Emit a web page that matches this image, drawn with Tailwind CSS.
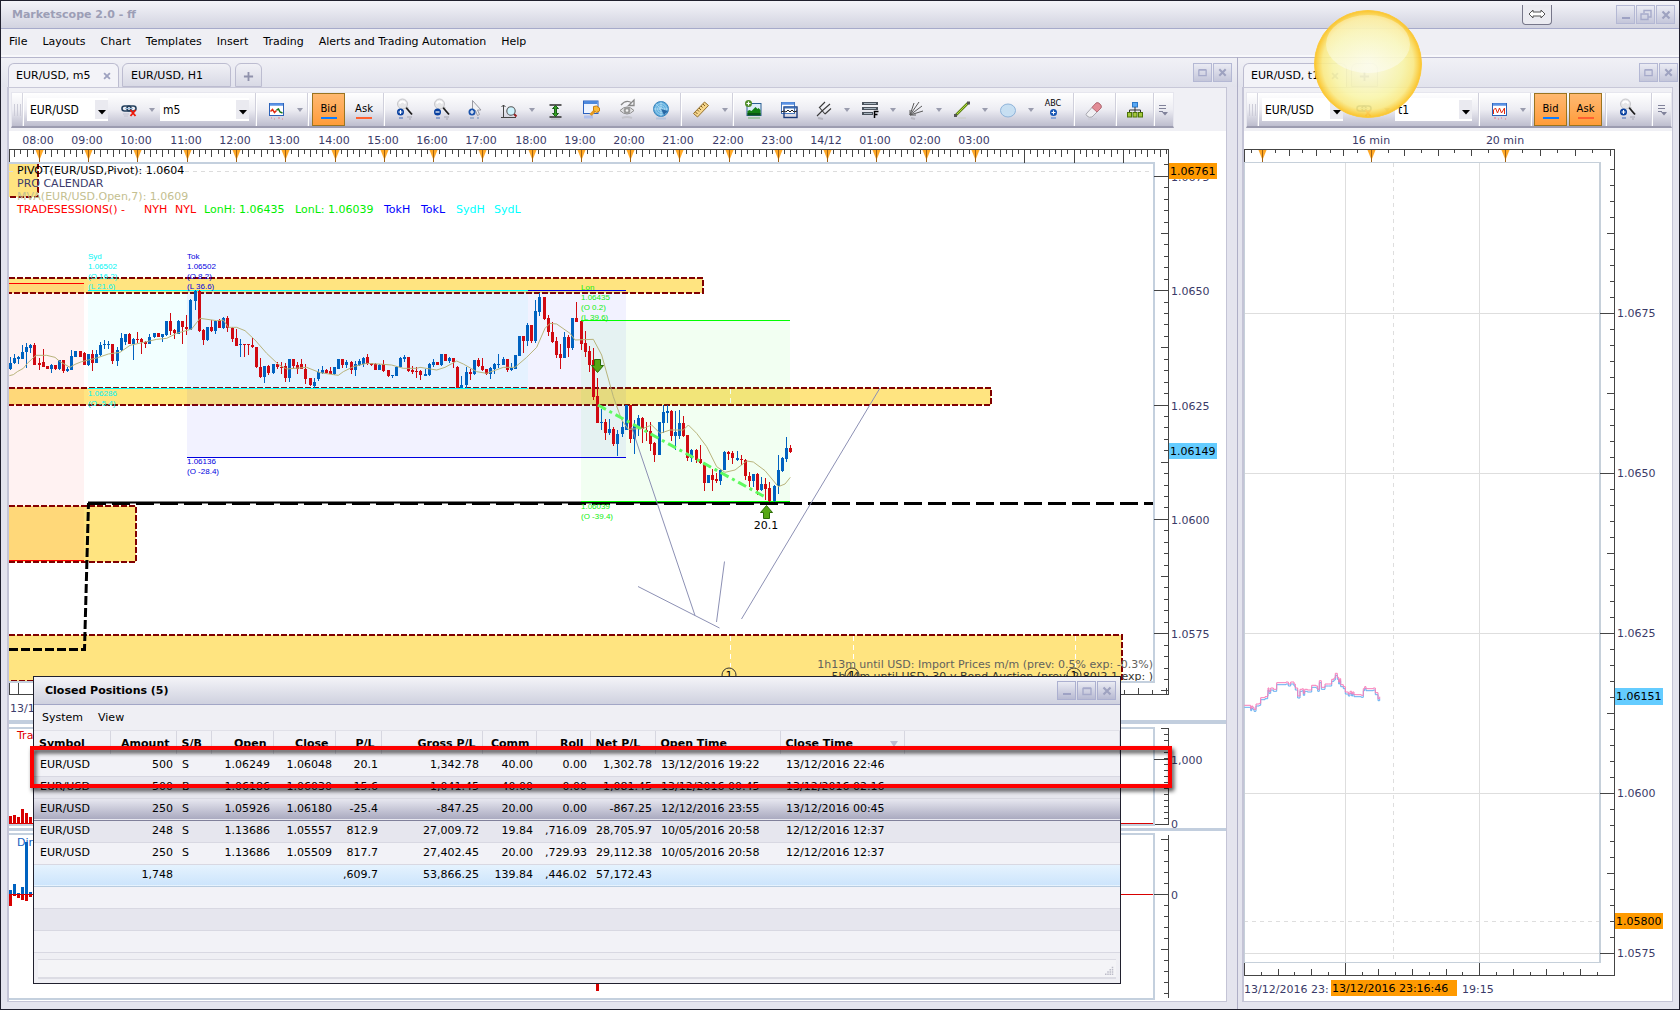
<!DOCTYPE html>
<html lang="en">
<head>
  <meta charset="UTF-8" />
  <meta name="viewport" content="width=device-width, initial-scale=1.0">
  <title>Marketscope 2.0 - ff</title>
  <script src="https://cdn.jsdelivr.net/npm/@tailwindcss/browser@4"></script>
</head>
<body class="font-['DejaVu_Sans',Verdana,sans-serif] text-[11px] leading-4 text-black">

  <!-- Icon sprite -->
  <svg class="hidden">
    <symbol id="i-link" viewBox="0 0 24 24">
      <g fill="none" stroke="#24405e" stroke-width="1.600"><rect x="5" y="8" width="9" height="5" rx="2.500"/><rect x="10" y="8" width="9" height="5" rx="2.500"/></g>
      <path d="M8 10.500h8" stroke="#9cc0e0" stroke-width="1"/>
      <path d="M13.500 12l5 6M18.500 12l-5 6" stroke="#f01808" stroke-width="1.800"/>
      <path d="M6 16h6M7 18h4" stroke="#c4c4d2"/>
    </symbol>
    <symbol id="i-chart" viewBox="0 0 24 24">
      <rect x="5.500" y="5.500" width="14" height="12" fill="#fff" stroke="#2c62b8"/><path d="M6 6.500h13" stroke="#5b92e4" stroke-width="2.500"/>
      <path d="M6.500 13.500l2-2 2 3 2-2" fill="none" stroke="#e22a10" stroke-width="1.500"/><path d="M12.500 12l2-1 1.500 3 2.500 1" fill="none" stroke="#187818" stroke-width="1.500"/>
      <path d="M7 20h1M10 21h1M14 20h2M18 21h1" stroke="#d8a8b4" stroke-width="2"/>
    </symbol>
    <symbol id="i-ticks" viewBox="0 0 24 24">
      <rect x="5.500" y="5.500" width="14" height="12" fill="#fff" stroke="#2c62b8"/><path d="M6 6.500h13" stroke="#5b92e4" stroke-width="2.500"/>
      <path d="M6.500 16v-4l2-2 2 5 2-5 2 5 3-5v6" fill="none" stroke="#e22a10"/>
      <path d="M7 20h2M11 21h1M14 20h1M18 21h1" stroke="#e0a0b0" stroke-width="2"/>
    </symbol>
    <symbol id="i-zoomin" viewBox="0 0 24 24">
      <path d="M13.500 9l6.500 7.500" stroke="#1c1c1c" stroke-width="1.800"/><path d="M13.500 8l3 2" stroke="#aaa"/><circle cx="10.500" cy="6" r="5" fill="#e6e6e8" stroke="#c6c6ca"/><path d="M7.500 5.500q3-4 6 0" stroke="#fff" stroke-width="2" fill="none"/>
      <circle cx="8.500" cy="14" r="3.500" fill="#0840a0"/><path d="M8.500 12v4M6.500 14h4" stroke="#fff" stroke-width="1.200"/>
      <path d="M7 20h4" stroke="#8ca0cc" stroke-width="2"/><path d="M15 19h5M17 21h2" stroke="#a8a8b4"/>
    </symbol>
    <symbol id="i-zoomout" viewBox="0 0 24 24">
      <path d="M13.500 9l6.500 7.500" stroke="#1c1c1c" stroke-width="1.800"/><path d="M13.500 8l3 2" stroke="#aaa"/><circle cx="10.500" cy="6" r="5" fill="#e6e6e8" stroke="#c6c6ca"/><path d="M7.500 5.500q3-4 6 0" stroke="#fff" stroke-width="2" fill="none"/>
      <circle cx="8.500" cy="14" r="3.500" fill="#0840a0"/><path d="M6.500 14h4" stroke="#fff" stroke-width="1.200"/>
      <path d="M7 20h4" stroke="#8ca0cc" stroke-width="2"/><path d="M15 19h5M17 21h2" stroke="#a8a8b4"/>
    </symbol>
    <symbol id="i-cursor" viewBox="0 0 24 24">
      <path d="M9.500 2.500v13l3-3 2 5 2-1-2-4.500h3.500z" fill="#f2f2f4" stroke="#9a9aa2"/>
      <circle cx="9" cy="14" r="3.500" fill="#1c54ac"/><path d="M9 12v4M7 14h4" stroke="#fff" stroke-width="1.200"/><path d="M7 20h4M14 20h2" stroke="#a0b0cc" stroke-width="2"/>
    </symbol>
    <symbol id="i-range" viewBox="0 0 24 24">
      <path d="M6.500 7v12.500M4.500 9l2-2 2 2M4 19.500h15" fill="none" stroke="#444"/><path d="M17 16l2.500 2.500" stroke="#962020" stroke-width="2"/><circle cx="14" cy="13" r="4.200" fill="#cdf2fc" stroke="#555" stroke-width="1.100"/>
    </symbol>
    <symbol id="i-fit" viewBox="0 0 24 24">
      <path d="M6.500 7h12M6.500 19h12" stroke="#2c2c2c" stroke-width="1.500"/><path d="M12.500 7.500l3 3h-2v5h2l-3 3-3-3h2v-5h-2z" fill="#34a020" stroke="#0c540c" stroke-width=".9"/><path d="M8 21h9" stroke="#b0b4bc"/>
    </symbol>
    <symbol id="i-key" viewBox="0 0 24 24">
      <rect x="4.500" y="3" width="14.500" height="12.500" fill="#eef4ff" stroke="#2c62c0"/><path d="M5 4.500h13.500" stroke="#4d88dc" stroke-width="3"/><path d="M11.500 17l5-5" stroke="#e49a20" stroke-width="3"/><path d="M12 17.500l1.500 1" stroke="#c87e10" stroke-width="1.500"/><path d="M14.500 8.500l3-.500 3 2v3l-3 1.500-3-2z" fill="#fcba38" stroke="#c87e10"/><path d="M5 19h9" stroke="#b0c0ec" stroke-width="3"/>
    </symbol>
    <symbol id="i-eye" viewBox="0 0 24 24">
      <path d="M6 7q5-6 11-2M19 2v5.500h-5.500z" fill="none" stroke="#888" stroke-width="1.300"/><path d="M5 12.500q7-7 14 0q-7 7-14 0z" fill="#e4e4e6" stroke="#8c8c8c"/><circle cx="12" cy="12.500" r="3.300" fill="#9a9a9a"/><circle cx="12" cy="12.500" r="1.300" fill="#f4f4f4"/><path d="M7 20q5-2 10 0" fill="none" stroke="#c4c4cc" stroke-width="2"/>
    </symbol>
    <symbol id="i-globe" viewBox="0 0 24 24">
      <circle cx="12" cy="11" r="7.500" fill="#5cabdc" stroke="#3a84bc"/><g fill="none" stroke="#b0dcf4" stroke-width=".8"><circle cx="12" cy="11" r="5.500"/><circle cx="12" cy="11" r="3.500"/><circle cx="12" cy="11" r="1.500"/><path d="M12 3.500v15M4.500 11h15M7 6l10 10"/></g><path d="M12 11l7 2-4 4z" fill="#2868a4"/><path d="M7 20.500h10" stroke="#b4c4dc" stroke-width="2"/>
    </symbol>
    <symbol id="i-ruler" viewBox="0 0 24 24">
      <path d="M4.500 15.500L15.500 4l4 3.500L8.500 19z" fill="#f6d68c" stroke="#94702c"/><path d="M14 6l2 2M12 8l1.500 1.500M10 10l2 2M8.500 12l1.500 1.500M6.500 14l2 2" stroke="#7c5a20"/>
    </symbol>
    <symbol id="i-picture" viewBox="0 0 24 24">
      <rect x="6" y="5.500" width="14" height="12" fill="#dcecf8" stroke="#2c6094"/><path d="M6.500 17v-4l2-1 2 1 4-4 2 2 1-1 2 2v5z" fill="#148014"/><path d="M6.500 15h13v2.500h-13z" fill="#0a5414"/><circle cx="7.500" cy="5.500" r="3.500" fill="#4c8c24"/><path d="M7.500 3.500v4M5.500 5.500h4" stroke="#fff" stroke-width="1.200"/><path d="M7 20h12" stroke="#a4c4a8" stroke-width="2"/>
    </symbol>
    <symbol id="i-windows" viewBox="0 0 24 24">
      <rect x="4.500" y="4.500" width="13" height="11" fill="#fff" stroke="#4678c0"/><path d="M5 5.500h12" stroke="#5b92e4" stroke-width="2.500"/><rect x="7" y="9" width="13" height="10.500" fill="none" stroke="#1c3c7c" stroke-width="1.400"/><path d="M7.500 9.500h12" stroke="#3c6cb4" stroke-width="2"/><path d="M4 14l3-1 2 1 2-2 2 2 2-2 2 2 3-1" fill="none" stroke="#222"/>
    </symbol>
    <symbol id="i-fork" viewBox="0 0 24 24">
      <path d="M5 18l5-5M7 9l6 7M10 13l8-7M7.500 9.500L13 4M13 16l6-5.500" fill="none" stroke="#3a3a3a" stroke-width="1.100"/><path d="M6 20l5 1" stroke="#b4b4be" stroke-width="2"/>
    </symbol>
    <symbol id="i-fib" viewBox="0 0 24 24">
      <path d="M4 5.500h16M4 10.500h16M4 15.500h11" stroke="#4a525c" stroke-width="3"/><path d="M6 5.500h12M6 10.500h12M6 15.500h8" stroke="#a8b4be"/><path d="M16.500 20v-6.500h4M16.500 16.500h3" stroke="#000" stroke-width="1.500" fill="none"/>
    </symbol>
    <symbol id="i-fan" viewBox="0 0 24 24">
      <path d="M6 17L10 5M6 17L15 4M6 17L18 8M6 17L19 13M6 12v5h6" fill="none" stroke="#5a5a5a"/><path d="M7 20l4 1" stroke="#b8b8c2" stroke-width="2"/>
    </symbol>
    <symbol id="i-line" viewBox="0 0 24 24">
      <path d="M6 17L18 5" stroke="#5c8414" stroke-width="2.500"/><path d="M6 17L18 5" stroke="#b2d83a"/><rect x="4" y="16" width="3" height="3" fill="#555"/><rect x="17" y="3.500" width="3" height="3" fill="#555"/><path d="M8 20h8" stroke="#c8ccc4"/>
    </symbol>
    <symbol id="i-ellipse" viewBox="0 0 24 24">
      <ellipse cx="12" cy="12.500" rx="7.500" ry="6.500" fill="#c7dff2" stroke="#8fb4da"/>
    </symbol>
    <symbol id="i-eraser" viewBox="0 0 24 24">
      <path d="M5 15L14 5q2-1 4 1t1 4l-9 9q-3 1-5-1t0-3z" fill="#f0f0f3" stroke="#a8a8b0"/><path d="M10 9.500L14 5q2-1 4 1t1 4l-4 4z" fill="#e28c96" stroke="#b86c76"/><path d="M6 21h9" stroke="#c8c8d2"/>
    </symbol>
    <symbol id="i-tree" viewBox="0 0 24 24">
      <rect x="9.500" y="4.500" width="5" height="4.500" fill="#58a8f4" stroke="#2c78c8"/><path d="M12 9v5M6.500 15v-3h11v3" fill="none" stroke="#333"/><g fill="#a4c83c" stroke="#4c7408"><rect x="4.500" y="14.500" width="4" height="4.500"/><rect x="10" y="14.500" width="4" height="4.500"/><rect x="15.500" y="14.500" width="4" height="4.500"/></g>
    </symbol>
    <symbol id="i-caret" viewBox="0 0 8 8"><path d="M1 2h6L4 6z" fill="#9a9cae"/></symbol>
    <symbol id="i-more" viewBox="0 0 10 12"><path d="M1 1.500h7M1 4.500h7M1 7.500h4" stroke="#80829a"/><path d="M4 8h6l-3 3.500z" fill="#80829a"/></symbol>
    <symbol id="i-min" viewBox="0 0 12 12"><path d="M2 9h8" stroke="#9ea2c4" stroke-width="2"/></symbol>
    <symbol id="i-max" viewBox="0 0 12 12"><path d="M2 3.500h8v6H2zM2 3h8" fill="none" stroke="#a6aaca" stroke-width="1.400"/></symbol>
    <symbol id="i-restore" viewBox="0 0 12 12"><path d="M4 4V1.500h7V8H8M1 5h7v5.500H1z" fill="none" stroke="#a6aaca" stroke-width="1.400"/></symbol>
    <symbol id="i-close" viewBox="0 0 12 12"><path d="M2.500 2.500l7 7M9.500 2.500l-7 7" stroke="#9ea2c0" stroke-width="2.200"/></symbol>
    <symbol id="i-plus" viewBox="0 0 12 12"><path d="M6 1v10M1 6h10" stroke="#9092ac" stroke-width="2"/></symbol>
  </svg>

  <div class="relative flex h-screen flex-col overflow-hidden border border-[#20202e] bg-[#e4e4ee]">

    <!-- Title bar -->
    <header class="relative flex h-7 shrink-0 items-center justify-between border-b border-[#a6aaca] bg-linear-to-b from-[#f4f4f9] to-[#d2d3e0] pr-1 pl-[11px]">
      <h1 class="font-bold text-[#9c9eb6]">Marketscope 2.0 - ff</h1>
      <div class="flex items-center">
        <button aria-label="Dock" class="mr-16 flex h-5 w-[30px] items-center justify-center rounded-b border border-t-0 border-[#77778a] bg-[#ebebf1]">
          <svg width="18" height="10" viewBox="0 0 18 10"><path d="M1 5l4-4v2h8V1l4 4-4 4V7H5v2z" fill="#fff" stroke="#555"/></svg>
        </button>
        <div class="flex gap-px">
          <button aria-label="Minimize" class="flex h-[19px] w-[19px] items-center justify-center border border-[#b4b8d4] bg-linear-to-b from-[#eaebf3] to-[#c4c6da]"><svg width="12" height="12"><use href="#i-min"/></svg></button>
          <button aria-label="Restore" class="flex h-[19px] w-[19px] items-center justify-center border border-[#b4b8d4] bg-linear-to-b from-[#eaebf3] to-[#c4c6da]"><svg width="12" height="12"><use href="#i-restore"/></svg></button>
          <button aria-label="Close" class="flex h-[19px] w-[19px] items-center justify-center border border-[#b4b8d4] bg-linear-to-b from-[#eaebf3] to-[#c4c6da]"><svg width="12" height="12"><use href="#i-close"/></svg></button>
        </div>
      </div>
    </header>

    <!-- Menu -->
    <nav class="flex h-7 shrink-0 items-center gap-[15px] border-b-2 border-[#f8f8fb] bg-[#efeff4] pl-2">
      <a href="#">File</a>
      <a href="#">Layouts</a>
      <a href="#">Chart</a>
      <a href="#">Templates</a>
      <a href="#">Insert</a>
      <a href="#">Trading</a>
      <a href="#">Alerts and Trading Automation</a>
      <a href="#">Help</a>
    </nav>

    <main class="flex min-h-0 flex-1">

      <!-- Left pane -->
      <section class="flex min-w-0 flex-1 flex-col">
        <div class="flex h-[30px] shrink-0 items-end border-t border-[#b6b6cc] bg-linear-to-b from-[#f1f1f6] to-[#e2e3ed] pl-[7px] pr-[5px]">
          <div class="flex h-6 w-[111px] items-center justify-between rounded-t-md border border-b-0 border-[#bcbcd0] bg-[#f3f3f8] pt-px pr-[6px] pl-[7px]">
            <span>EUR/USD, m5</span>
            <button aria-label="Close tab"><svg width="10" height="10"><use href="#i-close"/></svg></button>
          </div>
          <div class="ml-[3px] flex h-6 w-[109px] items-center rounded-t-md border border-[#bcbcd0] bg-linear-to-b from-[#f1f1f6] to-[#d8d9e5] pt-0.5 pl-2">EUR/USD, H1</div>
          <button aria-label="New tab" class="ml-1 flex h-6 w-[27px] items-center justify-center rounded-t-md border border-[#bcbcd0] bg-linear-to-b from-[#f1f1f6] to-[#d8d9e5] pt-0.5"><svg width="11" height="11"><use href="#i-plus"/></svg></button>
          <div class="mb-[5px] ml-auto flex gap-px">
            <button aria-label="Maximize chart" class="flex h-[19px] w-[19px] items-center justify-center border border-[#b4b8d4] bg-linear-to-b from-[#eaebf3] to-[#c4c6da]"><svg width="11" height="11"><use href="#i-max"/></svg></button>
            <button aria-label="Close chart" class="flex h-[19px] w-[19px] items-center justify-center border border-[#b4b8d4] bg-linear-to-b from-[#eaebf3] to-[#c4c6da]"><svg width="11" height="11"><use href="#i-close"/></svg></button>
          </div>
        </div>

        <div class="mr-[10px] mb-[7px] ml-[6px] flex min-h-0 flex-1 flex-col border-r border-l-2 border-b border-[#c4c4d6] bg-white">
          <div class="h-11 shrink-0 overflow-hidden border-t border-[#c8c8d8] bg-[#f0f0f5] pt-1 pl-0.5">
            <div class="flex h-9 w-[1163px] items-stretch border border-b-2 border-[#e6e6ee] border-b-[#9c9cb0] bg-linear-to-b from-white via-[#ededf3] to-[#bdbdce]">
              <div class="flex w-[10px] shrink-0 items-center justify-center gap-0.5"><i class="h-3 w-px bg-[#ccccd8]"></i><i class="h-3 w-px bg-[#ccccd8]"></i><i class="h-3 w-px bg-[#ccccd8]"></i></div>
              <i class="w-0.5 shrink-0 border-r border-white bg-[#d6d6e0]"></i>
              <div class="relative ml-[3px] w-[81px] shrink-0 self-center">
                <select aria-label="Symbol" class="block h-[23px] w-full appearance-none bg-white pl-[3px] font-['DejaVu_Sans_Condensed','DejaVu_Sans',sans-serif] text-xs"><option>EUR/USD</option></select>
                <span class="pointer-events-none absolute top-0.5 right-0 bottom-0.5 flex w-[13px] items-end justify-center bg-[#eaeaf0] pb-1"><svg width="8" height="5"><path d="M0 0h8L4 4.500z"/></svg></span>
              </div>
              <button aria-label="Unlink" class="ml-[3px] flex w-9 shrink-0 items-center justify-center"><svg width="24" height="24"><use href="#i-link"/></svg></button>
              <button aria-label="Link options" class="flex w-[9px] shrink-0 items-center justify-center"><svg width="8" height="8"><use href="#i-caret"/></svg></button>
              <div class="relative ml-1 w-[89px] shrink-0 self-center">
                <select aria-label="Period" class="block h-[23px] w-full appearance-none bg-white pl-[3px] font-['DejaVu_Sans_Condensed','DejaVu_Sans',sans-serif] text-xs"><option>m5</option></select>
                <span class="pointer-events-none absolute top-0.5 right-0 bottom-0.5 flex w-[13px] items-end justify-center bg-[#eaeaf0] pb-1"><svg width="8" height="5"><path d="M0 0h8L4 4.500z"/></svg></span>
              </div>
              <i class="ml-1.5 w-0.5 shrink-0 border-r border-white bg-[#d0d0dc]"></i>
              <button aria-label="Chart type" class="flex w-[38px] shrink-0 items-center justify-center"><svg width="24" height="24"><use href="#i-chart"/></svg></button>
              <button aria-label="Chart type options" class="flex w-[9px] shrink-0 items-center justify-center"><svg width="8" height="8"><use href="#i-caret"/></svg></button>
              <i class="ml-[3px] w-0.5 shrink-0 border-r border-white bg-[#d0d0dc]"></i>
              <button class="ml-[3px] flex w-[33px] shrink-0 flex-col items-center border border-[#9a7420] bg-linear-to-b from-[#ffb870] to-[#ff9c38] pt-[7px] text-[10px] leading-4">Bid<i class="h-0.5 w-4 bg-[#0a7cff]"></i></button>
              <button class="flex w-[38px] shrink-0 flex-col items-center border border-transparent pt-[7px] text-[10px] leading-4">Ask<i class="h-0.5 w-4 bg-[#ff6030]"></i></button>
              <i class="w-0.5 shrink-0 border-r border-white bg-[#d0d0dc]"></i>
              <button aria-label="Zoom in" class="flex w-[38px] shrink-0 items-center justify-center"><svg width="24" height="24"><use href="#i-zoomin"/></svg></button>
              <button aria-label="Zoom out" class="flex w-[35px] shrink-0 items-center justify-center"><svg width="24" height="24"><use href="#i-zoomout"/></svg></button>
              <button aria-label="Pointer" class="flex w-[33px] shrink-0 items-center justify-center"><svg width="24" height="24"><use href="#i-cursor"/></svg></button>
              <button aria-label="Zoom range" class="flex w-9 shrink-0 items-center justify-center"><svg width="24" height="24"><use href="#i-range"/></svg></button>
              <button aria-label="Zoom range options" class="flex w-[10px] shrink-0 items-center justify-center"><svg width="8" height="8"><use href="#i-caret"/></svg></button>
              <button aria-label="Fit" class="flex w-9 shrink-0 items-center justify-center"><svg width="24" height="24"><use href="#i-fit"/></svg></button>
              <button aria-label="Properties" class="flex w-9 shrink-0 items-center justify-center"><svg width="24" height="24"><use href="#i-key"/></svg></button>
              <button aria-label="Hide" class="flex w-[35px] shrink-0 items-center justify-center"><svg width="24" height="24"><use href="#i-eye"/></svg></button>
              <button aria-label="Sessions" class="flex w-[33px] shrink-0 items-center justify-center"><svg width="24" height="24"><use href="#i-globe"/></svg></button>
              <i class="ml-[3px] w-0.5 shrink-0 border-r border-white bg-[#d0d0dc]"></i>
              <button aria-label="Ruler" class="flex w-[38px] shrink-0 items-center justify-center"><svg width="24" height="24"><use href="#i-ruler"/></svg></button>
              <button aria-label="Ruler options" class="flex w-[9px] shrink-0 items-center justify-center"><svg width="8" height="8"><use href="#i-caret"/></svg></button>
              <i class="ml-[3px] w-0.5 shrink-0 border-r border-white bg-[#d0d0dc]"></i>
              <button aria-label="Add indicator" class="flex w-[38px] shrink-0 items-center justify-center"><svg width="24" height="24"><use href="#i-picture"/></svg></button>
              <button aria-label="Overlay" class="flex w-[33px] shrink-0 items-center justify-center"><svg width="24" height="24"><use href="#i-windows"/></svg></button>
              <button aria-label="Pitchfork" class="flex w-[38px] shrink-0 items-center justify-center"><svg width="24" height="24"><use href="#i-fork"/></svg></button>
              <button aria-label="Pitchfork options" class="flex w-2 shrink-0 items-center justify-center"><svg width="8" height="8"><use href="#i-caret"/></svg></button>
              <button aria-label="Fibonacci" class="flex w-[38px] shrink-0 items-center justify-center"><svg width="24" height="24"><use href="#i-fib"/></svg></button>
              <button aria-label="Fibonacci options" class="flex w-2 shrink-0 items-center justify-center"><svg width="8" height="8"><use href="#i-caret"/></svg></button>
              <button aria-label="Gann fan" class="flex w-[38px] shrink-0 items-center justify-center"><svg width="24" height="24"><use href="#i-fan"/></svg></button>
              <button aria-label="Gann fan options" class="flex w-2 shrink-0 items-center justify-center"><svg width="8" height="8"><use href="#i-caret"/></svg></button>
              <button aria-label="Line" class="flex w-[38px] shrink-0 items-center justify-center"><svg width="24" height="24"><use href="#i-line"/></svg></button>
              <button aria-label="Line options" class="flex w-2 shrink-0 items-center justify-center"><svg width="8" height="8"><use href="#i-caret"/></svg></button>
              <button aria-label="Ellipse" class="flex w-[38px] shrink-0 items-center justify-center"><svg width="24" height="24"><use href="#i-ellipse"/></svg></button>
              <button aria-label="Ellipse options" class="flex w-2 shrink-0 items-center justify-center"><svg width="8" height="8"><use href="#i-caret"/></svg></button>
              <button class="flex w-9 shrink-0 flex-col items-center justify-center text-[8px] leading-2">ABC<svg width="9" height="12" viewBox="0 0 9 12"><circle cx="4.500" cy="4.500" r="3.500" fill="#1656b4"/><path d="M4.500 2.500v4M2.500 4.500h4" stroke="#fff"/><path d="M2 10h5" stroke="#8ca8d8" stroke-width="2"/></svg></button>
              <i class="ml-0.5 w-0.5 shrink-0 border-r border-white bg-[#d0d0dc]"></i>
              <button aria-label="Eraser" class="flex w-[38px] shrink-0 items-center justify-center"><svg width="24" height="24"><use href="#i-eraser"/></svg></button>
              <i class="ml-0.5 w-0.5 shrink-0 border-r border-white bg-[#d0d0dc]"></i>
              <button aria-label="Object tree" class="flex w-9 shrink-0 items-center justify-center"><svg width="24" height="24"><use href="#i-tree"/></svg></button>
              <i class="w-0.5 shrink-0 border-r border-white bg-[#d0d0dc]"></i>
              <button aria-label="More" class="flex w-4 shrink-0 items-center justify-center"><svg width="10" height="12"><use href="#i-more"/></svg></button>
            </div>
          </div>

          <!-- Main chart -->
          <svg class="min-h-0 w-full flex-1" font-size="11" aria-label="EUR/USD m5 chart">
            <g transform="translate(-9,-131)">
              <g fill="#ffe480">
                <rect x="9" y="163" width="29" height="34"/>
                <rect x="9" y="278" width="694" height="15"/>
                <rect x="9" y="388" width="982" height="17"/>
                <rect x="9" y="506" width="127" height="56"/>
                <rect x="9" y="635" width="1113" height="46"/>
              </g>
              <path d="M9 171.500H1153" stroke="#dcdcdc" stroke-dasharray="4 4"/>
              <g stroke="#fff" stroke-dasharray="5 4"><path d="M730.500 389v16M730.500 636v31M853.500 636v31M1075.500 636v31"/></g>
              <g fill="none" stroke="#800000" stroke-width="2" stroke-dasharray="6 2" shape-rendering="crispEdges">
                <path d="M38 163v34H9M9 278H703v15H9M9 388H991v17H9M9 506H136v56H9M9 635H1122v46H9"/>
              </g>
              <rect x="9" y="283" width="75" height="278" fill="#f00" fill-opacity=".05"/>
              <rect x="88" y="290" width="440" height="98" fill="#0ff" fill-opacity=".05"/>
              <rect x="187" y="290" width="439" height="167" fill="#00f" fill-opacity=".05"/>
              <rect x="581" y="320" width="209" height="181" fill="#0f0" fill-opacity=".05"/>
              <g stroke="#000" stroke-width="3" fill="none">
                <path d="M9 649.500H84.500L88.500 503" stroke-dasharray="9 3"/>
                <path d="M88 502.500H790" stroke-width="2"/>
                <path d="M88 503.500H1153" stroke-dasharray="18 6"/>
              </g>
              <g stroke-width="1" shape-rendering="crispEdges">
                <path d="M9 283.500h75M9 560.500h75" stroke="#f00"/>
                <path d="M528 290.500h98M187 457.500h439" stroke="#0000e0"/>
                <path d="M88 290.500h440M88 388.500h440" stroke="#0ff"/>
                <path d="M581 320.500h209M581 501.500h209" stroke="#0f0"/>
              </g>
              <g id="candles" shape-rendering="crispEdges"></g>
              <path id="mva" fill="none" stroke="#b8b47c"/>
              <path d="M598 405L767 498" stroke="#60fa60" stroke-width="3" stroke-dasharray="9 4 3 4"/>
              <g fill="#56a814" stroke="#2c6c08">
                <path d="M594.500 359.500h6v6h3l-6 7-6-7h3z"/>
                <path d="M763.500 518.500h6v-6h3l-6-7-6 7h3z"/>
              </g>
              <g stroke="#8c90b4" fill="none"><path d="M631.500 427L695 615.500M638 586.500L719.500 628M724.500 561.500L716.500 622M741.500 619L880 388"/></g>
              <text x="766" y="529" text-anchor="middle">20.1</text>

              <g font-family="'Liberation Sans',Arial,sans-serif" font-size="8">
                <g fill="#00f4f4"><text x="88" y="259">Syd</text><text x="88" y="269">1.06502</text><text x="88" y="279">(O 16.2)</text><text x="88" y="289">(L 21.6)</text><text x="88" y="396">1.06286</text><text x="88" y="406">(O -5.4)</text></g>
                <g fill="#0000e0"><text x="187" y="259">Tok</text><text x="187" y="269">1.06502</text><text x="187" y="279">(O 8.2)</text><text x="187" y="289">(L 36.6)</text><text x="187" y="464">1.06136</text><text x="187" y="474">(O -28.4)</text></g>
                <g fill="#10ee10"><text x="581" y="290">Lon</text><text x="581" y="300">1.06435</text><text x="581" y="310">(O 0.2)</text><text x="581" y="320">(L 39.6)</text><text x="581" y="509">1.06039</text><text x="581" y="519">(O -39.4)</text></g>
              </g>

              <text x="17" y="174">PIVOT(EUR/USD,Pivot): 1.0604</text>
              <text x="17" y="187" fill="#3c3c6c">PRO CALENDAR</text>
              <text x="17" y="200" fill="#c4c090">MVA(EUR/USD.Open,7): 1.0609</text>
              <g><text x="17" y="213" fill="#f00">TRADESESSIONS() -</text><text x="144" y="213" fill="#f00">NYH</text><text x="175" y="213" fill="#f00">NYL</text><text x="204" y="213" fill="#0e0">LonH: 1.06435</text><text x="295" y="213" fill="#0e0">LonL: 1.06039</text><text x="384" y="213" fill="#00f">TokH</text><text x="421" y="213" fill="#00f">TokL</text><text x="456" y="213" fill="#0ff">SydH</text><text x="494" y="213" fill="#0ff">SydL</text></g>

              <g fill="none" stroke="#333"><circle cx="729" cy="675" r="7"/><circle cx="852" cy="675" r="7"/><circle cx="1074" cy="675" r="7"/></g>
              <g text-anchor="middle"><text x="729" y="679">1</text><text x="852" y="679">1</text><text x="1074" y="679">1</text></g>
              <text x="1153" y="668" text-anchor="end" fill="#62625c">1h13m until USD: Import Prices m/m (prev: 0.5% exp: -0.3%)</text>
              <text x="1153" y="680" text-anchor="end" fill="#34342c">5h44m until USD: 30-y Bond Auction (prev: 2.80|2.1 exp: )</text>

              <!-- frames -->
              <g fill="none" stroke="#c4d0de" stroke-width="2" shape-rendering="crispEdges"><path d="M9 163H1154V682H9M9 728H1154V825H9M9 834H1154V999H9"/></g>
              <path d="M9 719.500h1217v4H9zM9 828h1217v3H9z" fill="#c2cede" shape-rendering="crispEdges"/>
              <path d="M9 823.500H1153M9 894.500H1153" stroke="#d80000"/>
              <g id="bars" shape-rendering="crispEdges"></g>
              <text x="17" y="739" fill="#e00000">Tra</text>
              <text x="17" y="846" fill="#1860c0">Dir</text>
              <text x="10" y="712" fill="#3c3c6c">13/12</text>
              <g id="axisL" fill="#3a3a68"></g>
              <rect x="1169" y="163" width="48" height="16" fill="#ff9a00"/><text x="1170" y="175">1.06761</text>
              <rect x="1169" y="443" width="48" height="16" fill="#64ccff"/><text x="1170" y="455">1.06149</text>
              <g fill="#3a3a68"><text x="1171" y="764">1,000</text><text x="1171" y="828">0</text><text x="1171" y="899">0</text></g>
            </g>
          </svg>
        </div>
      </section>

      <!-- Right pane -->
      <section class="flex w-[442px] shrink-0 flex-col border-l border-[#aeaec6]">
        <div class="flex h-[30px] shrink-0 items-end border-t border-[#b6b6cc] bg-linear-to-b from-[#f1f1f6] to-[#e2e3ed] pr-px pl-[5px]">
          <div class="flex h-6 w-[104px] items-center justify-between rounded-t-md border border-b-0 border-[#bcbcd0] bg-[#f3f3f8] pt-px pr-[6px] pl-[7px]">
            <span>EUR/USD, t1</span>
            <button aria-label="Close tab"><svg width="10" height="10"><use href="#i-close"/></svg></button>
          </div>
          <button aria-label="New tab" class="ml-1 flex h-6 w-[27px] items-center justify-center rounded-t-md border border-[#bcbcd0] bg-linear-to-b from-[#f1f1f6] to-[#d8d9e5] pt-0.5"><svg width="11" height="11"><use href="#i-plus"/></svg></button>
          <div class="mb-[5px] ml-auto flex gap-px">
            <button aria-label="Maximize chart" class="flex h-[19px] w-[19px] items-center justify-center border border-[#b4b8d4] bg-linear-to-b from-[#eaebf3] to-[#c4c6da]"><svg width="11" height="11"><use href="#i-max"/></svg></button>
            <button aria-label="Close chart" class="flex h-[19px] w-[19px] items-center justify-center border border-[#b4b8d4] bg-linear-to-b from-[#eaebf3] to-[#c4c6da]"><svg width="11" height="11"><use href="#i-close"/></svg></button>
          </div>
        </div>

        <div class="mr-[6px] mb-[7px] ml-1 flex min-h-0 flex-1 flex-col border-r border-l-2 border-b border-[#c4c4d6] bg-white">
          <div class="h-11 shrink-0 overflow-hidden border-t border-[#c8c8d8] bg-[#f0f0f5] pt-1 pl-0.5">
            <div class="flex h-9 items-stretch border border-b-2 border-[#e6e6ee] border-b-[#9c9cb0] bg-linear-to-b from-white via-[#ededf3] to-[#bdbdce]">
              <div class="flex w-[10px] shrink-0 items-center justify-center gap-0.5"><i class="h-3 w-px bg-[#ccccd8]"></i><i class="h-3 w-px bg-[#ccccd8]"></i><i class="h-3 w-px bg-[#ccccd8]"></i></div>
              <i class="w-0.5 shrink-0 border-r border-white bg-[#d6d6e0]"></i>
              <div class="relative ml-[3px] w-[81px] shrink-0 self-center">
                <select aria-label="Symbol" class="block h-[23px] w-full appearance-none bg-white pl-[3px] font-['DejaVu_Sans_Condensed','DejaVu_Sans',sans-serif] text-xs"><option>EUR/USD</option></select>
                <span class="pointer-events-none absolute top-0.5 right-0 bottom-0.5 flex w-[13px] items-end justify-center bg-[#eaeaf0] pb-1"><svg width="8" height="5"><path d="M0 0h8L4 4.500z"/></svg></span>
              </div>
              <button aria-label="Unlink" class="ml-[3px] flex w-9 shrink-0 items-center justify-center"><svg width="24" height="24"><use href="#i-link"/></svg></button>
              <button aria-label="Link options" class="flex w-[9px] shrink-0 items-center justify-center"><svg width="8" height="8"><use href="#i-caret"/></svg></button>
              <div class="relative ml-1 w-[77px] shrink-0 self-center">
                <select aria-label="Period" class="block h-[23px] w-full appearance-none bg-white pl-[3px] font-['DejaVu_Sans_Condensed','DejaVu_Sans',sans-serif] text-xs"><option>t1</option></select>
                <span class="pointer-events-none absolute top-0.5 right-0 bottom-0.5 flex w-[13px] items-end justify-center bg-[#eaeaf0] pb-1"><svg width="8" height="5"><path d="M0 0h8L4 4.500z"/></svg></span>
              </div>
              <i class="ml-1.5 w-0.5 shrink-0 border-r border-white bg-[#d0d0dc]"></i>
              <button aria-label="Chart type" class="flex w-[38px] shrink-0 items-center justify-center"><svg width="24" height="24"><use href="#i-ticks"/></svg></button>
              <button aria-label="Chart type options" class="flex w-[9px] shrink-0 items-center justify-center"><svg width="8" height="8"><use href="#i-caret"/></svg></button>
              <i class="ml-[3px] w-0.5 shrink-0 border-r border-white bg-[#d0d0dc]"></i>
              <button class="ml-0.5 flex w-[33px] shrink-0 flex-col items-center border border-[#9a7420] bg-linear-to-b from-[#ffb870] to-[#ff9c38] pt-[7px] text-[10px] leading-4">Bid<i class="h-0.5 w-4 bg-[#0a7cff]"></i></button>
              <button class="ml-0.5 flex w-[33px] shrink-0 flex-col items-center border border-[#9a7420] bg-linear-to-b from-[#ffb870] to-[#ff9c38] pt-[7px] text-[10px] leading-4">Ask<i class="h-0.5 w-4 bg-[#ff6030]"></i></button>
              <i class="ml-[3px] w-0.5 shrink-0 border-r border-white bg-[#d0d0dc]"></i>
              <button aria-label="Zoom in" class="flex w-10 shrink-0 items-center justify-center"><svg width="24" height="24"><use href="#i-zoomin"/></svg></button>
              <i class="ml-1 w-0.5 shrink-0 border-r border-white bg-[#d0d0dc]"></i>
              <button aria-label="More" class="flex flex-1 items-center justify-center"><svg width="10" height="12"><use href="#i-more"/></svg></button>
            </div>
          </div>

          <!-- Tick chart -->
          <svg class="min-h-0 w-full flex-1" font-size="11" aria-label="EUR/USD t1 chart">
            <g transform="translate(-1244,-131)">
              <g stroke="#dedede" shape-rendering="crispEdges">
                <path d="M1345.500 163v799M1479.500 163v799M1244 313.500h356M1244 473.500h356M1244 633.500h356M1244 793.500h356M1244 953.500h356"/>
                <path d="M1393.500 163v799M1244 921.500h356" stroke-dasharray="4 4"/>
              </g>
              <path d="M1244 162.500H1600V962.500H1244.500V162" fill="none" stroke="#c6d0da" shape-rendering="crispEdges"/>
              <path d="M1599.500 163V962" stroke="#c6d0da" stroke-width="2" shape-rendering="crispEdges"/>
              <path id="bidLine" fill="none" stroke="#64aef0"/>
              <path id="askLine" fill="none" stroke="#f87cb8"/>
              <g id="axisR" fill="#3a3a68"></g>
              <rect x="1615" y="688" width="48" height="17" fill="#64ccff"/><text x="1616" y="700">1.06151</text>
              <rect x="1615" y="913" width="48" height="16" fill="#ff9a00"/><text x="1616" y="925">1.05800</text>
              <text x="1244" y="993" fill="#3a3a68">13/12/2016 23:</text>
              <rect x="1331" y="980" width="126" height="16" fill="#ff9a00"/><text x="1332" y="992">13/12/2016 23:16:46</text>
              <text x="1462" y="993" fill="#3a3a68">19:15</text>
            </g>
          </svg>
        </div>
      </section>
    </main>

    <!-- Closed Positions window -->
    <section class="absolute top-[675px] left-8 flex h-[308px] w-[1088px] flex-col border border-[#20202e] bg-[#efeff4]">
      <header class="flex h-7 shrink-0 items-center justify-between border-b border-[#a2a6c6] bg-linear-to-b from-[#f4f4f8] to-[#cfd1df] pr-1 pl-[11px]">
        <h2 class="font-bold">Closed Positions (5)</h2>
        <div class="flex gap-px">
          <button aria-label="Minimize" class="flex h-[19px] w-[19px] items-center justify-center border border-[#acb0d0] bg-linear-to-b from-[#eaebf3] to-[#b8bad2]"><svg width="12" height="12"><use href="#i-min"/></svg></button>
          <button aria-label="Maximize" class="flex h-[19px] w-[19px] items-center justify-center border border-[#acb0d0] bg-linear-to-b from-[#eaebf3] to-[#b8bad2]"><svg width="12" height="12"><use href="#i-max"/></svg></button>
          <button aria-label="Close" class="flex h-[19px] w-[19px] items-center justify-center border border-[#acb0d0] bg-linear-to-b from-[#eaebf3] to-[#b8bad2]"><svg width="12" height="12"><use href="#i-close"/></svg></button>
        </div>
      </header>
      <nav class="flex h-[26px] shrink-0 items-center gap-[15px] border-b border-[#e0e0e8] pl-2">
        <a href="#">System</a>
        <a href="#">View</a>
      </nav>
      <table class="w-full table-fixed border-collapse whitespace-nowrap">
        <colgroup><col class="w-[76px]"><col class="w-[66px]"><col class="w-[35px]"><col class="w-[62px]"><col class="w-[62px]"><col class="w-[46px]"><col class="w-[101px]"><col class="w-[54px]"><col class="w-[54px]"><col class="w-[65px]"><col class="w-[125px]"><col class="w-[124px]"><col></colgroup>
        <thead>
          <tr class="h-[23px] bg-[#f1f1f6] text-left *:border-r *:border-[#d6d6e0] *:pt-0.5 *:pr-[6px] *:pl-[5px]">
            <th>Symbol</th><th class="text-right">Amount</th><th>S/B</th><th class="text-right">Open</th><th class="text-right">Close</th><th class="text-right">P/L</th><th class="text-right">Gross P/L</th><th class="text-right">Comm</th><th class="text-right">Roll</th><th>Net P/L</th><th>Open Time</th><th><span class="flex items-center justify-between">Close Time<svg width="8" height="6"><path d="M0 0h8L4 6z" fill="#bcbcd2"/></svg></span></th><th></th>
          </tr>
        </thead>
        <tbody id="rows"></tbody>
      </table>
      <div class="m-1 mt-1.5 flex flex-1 items-end justify-end border-b-2 border-t border-[#dcdce4] bg-[#f4f4f7]">
        <svg width="9" height="9" viewBox="0 0 12 12" class="m-0.5" fill="#bcbcc8"><path d="M9 1h2v2H9zM6 4h2v2H6zM9 4h2v2H9zM3 7h2v2H3zM6 7h2v2H6zM9 7h2v2H9zM0 10h2v2H0zM3 10h2v2H3zM6 10h2v2H6zM9 10h2v2H9z"/></svg>
      </div>
    </section>

    <!-- Highlight frame -->
    <div class="pointer-events-none absolute top-[745px] left-[29px] h-[42px] w-[1142px] border-4 border-[#fe0000] drop-shadow-[2px_3px_2px_rgba(0,0,0,0.75)]"></div>

    <!-- Pointer bubble -->
    <svg class="pointer-events-none absolute top-[8px] left-[1312px]" width="110" height="110" viewBox="0 0 110 110">
      <defs>
        <radialGradient id="ball"><stop offset="0" stop-color="#fdfce6" stop-opacity=".85"/><stop offset=".65" stop-color="#f9f5a4" stop-opacity=".85"/><stop offset=".85" stop-color="#faea84" stop-opacity=".9"/><stop offset="1" stop-color="#fcc222" stop-opacity=".95"/></radialGradient>
        <linearGradient id="gloss" x1="0" y1="0" x2="0" y2="1"><stop offset="0" stop-color="#fdeeb4" stop-opacity=".6"/><stop offset=".5" stop-color="#fafad8" stop-opacity=".5"/><stop offset="1" stop-color="#fcfcf4" stop-opacity=".6"/></linearGradient>
      </defs>
      <circle cx="55" cy="55" r="53.500" fill="url(#ball)" stroke="#fcca3c"/>
      <ellipse cx="55" cy="35" rx="42" ry="29" fill="url(#gloss)"/>
    </svg>
  </div>

  <script>
    // closed trades, one array per row in column order
    const trades = [
      ["EUR/USD", "500", "S", "1.06249", "1.06048", "20.1", "1,342.78", "40.00", "0.00", "1,302.78", "13/12/2016 19:22", "13/12/2016 22:46"],
      ["EUR/USD", "500", "B", "1.06186", "1.06030", "-15.6", "-1,041.45", "40.00", "0.00", "-1,081.45", "13/12/2016 00:45", "13/12/2016 02:16"],
      ["EUR/USD", "250", "S", "1.05926", "1.06180", "-25.4", "-847.25", "20.00", "0.00", "-867.25", "12/12/2016 23:55", "13/12/2016 00:45"],
      ["EUR/USD", "248", "S", "1.13686", "1.05557", "812.9", "27,009.72", "19.84", ",716.09", "28,705.97", "10/05/2016 20:58", "12/12/2016 12:37"],
      ["EUR/USD", "250", "S", "1.13686", "1.05509", "817.7", "27,402.45", "20.00", ",729.93", "29,112.38", "10/05/2016 20:58", "12/12/2016 12:37"],
      ["", "1,748", "", "", "", ",609.7", "53,866.25", "139.84", ",446.02", "57,172.43", "", ""],
      [], [], []
    ];
    const light = "bg-[#f2f2f7] border-[#d8d8e2]";
    const dark = "bg-[#e6e6ee] border-[#d8d8e2]";
    const rowStyle = [light, dark, "bg-linear-to-b from-[#eaeaf2] to-[#aaaac0] border-[#80809a]", dark, light, "bg-linear-to-b from-[#e6f3fe] to-[#cde5fc] border-[#b8cce0]", light, dark, light];
    const leftCols = [0, 2, 10, 11];
    document.getElementById("rows").innerHTML = trades.map((row, r) => {
      let cells = "";
      for (let c = 0; c < 13; c++) {
        const cls = leftCols.includes(c) ? "pl-1.5" : "pr-[3px] text-right";
        cells += `<td class="${cls}">${row[c] || ""}</td>`;
      }
      return `<tr class="h-[22px] border-b ${rowStyle[r]}">${cells}</tr>`;
    }).join("");

    // candles: colour, body top, body bottom, wick top, wick bottom (thirds of a pixel)
    const first = `B399 417 381 420,B384 399 373 402,B380 388 378 402,B366 387 345 387,B350 366 340 414,B345 353 341 370,R345 405 340 405,R400 404 385 420,R396 411 357 411,R408 416 408 417,B406 417 403 429,R405 417 405 420,B390 417 390 420,R390 423 390 430,B417 423 411 427,B378 420 360 420,B363 381 363 381,R363 380 363 381,R369 405 366 405,B372 405 372 408,R372 400 360 423,B372 399 360 399,B345 375 337 378,B342 346 330 357,B341 345 333 357,R342 393 342 403,B360 393 351 407,B324 360 309 363,B312 336 312 345,R312 342 309 342,B327 342 324 390,R326 330 306 340,R327 336 324 372,R336 342 333 354,B321 342 312 342,B309 322 309 324,R309 320 309 322,B312 321 312 336,B273 315 273 318,R273 303 249 315,R300 309 297 327,B273 312 270 312,R273 291 273 341,R291 297 255 315,B210 300 207 300,B183 212 180 240,R183 303 180 306,R300 330 297 345,B291 330 291 333,R291 303 270 306,B273 303 270 312,R270 294 267 294,B264 294 260 297,R264 294 258 306,R294 327 291 336,R324 348 297 348,B342 346 327 380,R342 346 342 380,R342 346 342 375,R345 352 324 354,R351 412 351 414,R411 441 384 444,B408 441 408 459,R408 429 405 436,B402 430 402 432,R402 411 397 417,R411 414 397 432,R408 444 399 456,B387 444 387 456,R387 408 387 417,R405 417 397 432,R402 417 387 418,R417 447 402 462,R444 465 444 468,B456 468 444 474,B426 447 417 453,B420 430 408 432,R420 430 418 432,R423 432 411 432,B411 432 411 436,B387 417 387 418,R387 405 387 415,B396 406 390 415,R396 420 393 432,B402 420 393 438,B394 406 388 408,B385 402 380 412,R381 402 372 405,R399 405 399 408,R402 420 399 420,B405 420 402 420,R402 424 390 426,R420 438 420 442,B435 438 435 444,B411 438 408 438,B384 412 381 414,B381 387 375 396,R381 424 381 426,R421 426 408 432,R423 427 410 444`;
    const second = `R333 345 330 360,B342 348 327 349,B312 345 310 348,B306 314 297 321,R306 315 306 315,B282 315 282 318,R282 303 282 303,B294 303 290 310,R294 306 294 324,R320 383 318 384,B374 383 348 384,B336 375 321 383,R336 342 327 360,B300 342 300 345,R300 318 294 321,R318 330 294 333,R327 342 327 345,B324 343 321 357,B312 327 309 342,B312 316 282 324,B297 315 291 315,R297 330 297 336,B324 330 309 333,B285 327 285 327,B228 288 228 288,R228 243 228 279,B195 243 189 258,R195 243 195 250,B153 243 120 250,B111 155 99 168,R111 178 111 180,R174 216 165 228,R216 246 186 249,R243 285 231 294,R282 294 252 327,B231 294 216 294,R231 264 225 291,B174 264 174 270,R174 186 126 186,R183 252 183 270,R249 276 213 291,R273 315 258 336,R300 411 264 420,R408 489 354 489,B486 489 447 510,R486 519 477 540,B507 520 477 525,R507 552 501 558,B522 552 510 588,B501 523 483 531,B435 510 435 510,R435 537 435 549,B498 537 480 582,B474 504 465 528,R474 507 471 549,R510 516 486 543,R513 552 486 573,R549 585 546 606,B486 585 486 585,B456 489 435 519,B453 460 435 489,R453 528 450 543,B516 528 453 570,B489 528 450 538,R489 528 468 531,R525 594 525 603,B570 594 567 606,R570 600 567 609,R597 609 555 612,R612 669 609 693,B645 669 645 669,R645 660 627 693,R657 663 639 669,B630 663 627 675,B576 630 573 630,R576 582 573 600,R579 594 573 612,B594 600 573 603,R597 601 585 615,R600 648 597 660,R648 663 636 681,B642 663 642 681,R642 690 639 705,B672 690 651 693,R672 687 654 720,R684 723 666 726,B678 723 675 726,B630 678 585 702,B594 633 591 636,B564 597 531 606,R564 576 555 579`;
    const palette = { B: "#0062c0", R: "#d00a12" };
    let out = "";
    let i = 0;
    for (const [block, base] of [[first, 230], [second, 260]]) {
      for (const item of block.split(",")) {
        const [top, bottom, high, low] = item.slice(1).split(" ").map(v => base + Math.round(v / 3));
        const x = Math.floor(10.3 + i * 4.106);
        const fill = palette[item[0]];
        out += `<rect x="${x - 1}" y="${top}" width="3" height="${Math.max(1, bottom - top)}" fill="${fill}"/><rect x="${x}" y="${high}" width="1" height="${low - high}" fill="${fill}"/>`;
        i++;
      }
    }
    document.getElementById("candles").innerHTML = out;

    // moving average
    const mvaA = "28,437 40,434 52,425 70,415 82,400 95,388 108,376 140,376 165,382 180,395 210,412 225,403 245,395 265,390 290,384 325,372 360,367 390,346 440,335 470,328 500,325 530,310 575,297 600,265 650,272 670,270 685,292 710,292 735,302 765,330 800,370 835,403 860,417 920,412 960,428 1015,436 1030,425 1060,410 1100,400 1150,403 1175,405 1210,415 1250,415";
    const mvaB = "0,322 50,330 75,322 110,303 130,312 170,335 200,340 250,322 285,322 320,292 350,262 375,205 390,190 410,192 450,220 465,240 520,238 545,285 580,410 605,480 625,508 670,505 695,495 720,520 750,510 790,510 805,495 830,520 860,560 890,620 915,637 945,630 980,603 1000,606 1035,632 1075,680 1095,672 1111,652";
    const scale = (s, ox, oy) => s.split(" ").map(p => { const [x, y] = p.split(","); return [ox + x / 3, oy + y / 3]; });
    document.getElementById("mva").setAttribute("d", "M" + scale(mvaA, 0, 230).concat(scale(mvaB, 420, 260)).map(p => p.join(" ")).join("L"));

    // volume style bars in the lower panels
    let bars = "";
    [816, 815, 817, 809, 813, 817].forEach((y, n) => bars += `<rect x="${9 + n * 4}" y="${y}" width="3" height="${824 - y}" fill="#d80000"/>`);
    [890, 884, 893, 887, 842, 892].forEach((y, n) => bars += `<rect x="${9 + n * 4}" y="${y}" width="3" height="${894 - y}" fill="#0062c0"/>`);
    [906, 896, 898, 900, 901, 897].forEach((y, n) => bars += `<rect x="${9 + n * 4}" y="894" width="3" height="${y - 894}" fill="#d80000"/>`);
    bars += `<rect x="596" y="980" width="3" height="11" fill="#d80000"/>`;
    document.getElementById("bars").innerHTML = bars;

    const px = v => Math.floor(v) + 0.5;
    const ticks = d => `<path d="${d}" fill="none" stroke="#444" shape-rendering="crispEdges"/>`;
    const marker = (x, y) => `<path d="M${x - 4} ${y}h8l-4 10z" fill="#ffa826"/><path d="M${x} ${y}v12" stroke="#a06010"/>`;

    // left axes
    let d = "M9.500 162V149.500H1168.500V694.500H9.500V683M18.500 683v11", labels = "", marks = "";
    for (let h = 0; h < 23; h++) {
      const x = 39.4 + h * 49.27;
      for (let k = 1; k < 8; k++) if (x + k * 6.16 < 1168) d += `M${px(x + k * 6.16)} 150v${k % 2 ? 4 : 7}`;
      if (h < 20) {
        const name = h === 16 ? "14/12" : String((h + 8) % 24).padStart(2, "0") + ":00";
        labels += `<text x="${Math.floor(x - 1)}" y="144" text-anchor="middle">${name}</text>`;
        marks += marker(px(x), 150);
      } else d += `M${px(x)} 150v13`;
    }
    for (let k = 1; k < 5; k++) d += `M${px(39.4 - k * 6.16)} 150v${k % 2 ? 4 : 7}`;
    for (let k = -1; k < 46; k++) {
      const y = px(176.3 + k * 11.435);
      const len = k % 10 === 0 ? 14 : k % 5 === 0 ? 7 : 4;
      d += `M${1168 - len} ${y}h${len}`;
      if (k % 10 === 0) labels += `<text x="1171" y="${y + 4}">${(1.0675 - k / 4000).toFixed(4)}</text>`;
    }
    for (let x = 1124; x < 1168; x += 14) d += `M${x}.5 694v${x % 4 ? -6 : -4}`;
    d += "M1161 728.500h7.500V824.500h-14M1154 759.500h14M1168.500 835V998M1154 894.500h14";
    for (let y = 734; y < 822; y += 6) d += `M1164 ${y}.5h4`;
    for (let k = -5; k < 10; k++) d += `M${k % 5 ? 1164 : 1161} ${px(894.5 + k * 11)}H1168`;
    document.getElementById("axisL").innerHTML = ticks(d) + marks + labels;

    // right axes
    d = "M1244.500 162V149.500H1614.500V975.500H1244.500V963"; labels = ""; marks = "";
    [1251, 1275, 1289, 1302, 1316, 1330, 1343, 1357, 1388, 1404, 1421, 1438, 1454, 1471, 1488, 1522, 1540, 1557, 1575, 1592, 1610].forEach((x, n) => d += `M${x}.5 150v${[2, 4, 6, 9, 11, 13, 16, 18, 20].includes(n) ? 6 : 3}`);
    [1262, 1371, 1505].forEach(x => marks += marker(x + 0.5, 150));
    labels += `<text x="1371" y="144" text-anchor="middle">16 min</text><text x="1505" y="144" text-anchor="middle">20 min</text>`;
    for (let k = -9; k < 41; k++) {
      const len = k % 10 === 0 ? 14 : k % 5 === 0 ? 7 : 4;
      d += `M${1614 - len} ${313 + k * 16}.5h${len}`;
      if (k % 10 === 0) labels += `<text x="1617" y="${317 + k * 16}">${(1.0675 - k / 4000).toFixed(4)}</text>`;
    }
    for (let k = 1; k < 22; k++) d += `M${px(1244.5 + k * 16.8)} 975v${k === 6 || k === 14 ? -12 : k % 2 ? -3 : -6}`;
    document.getElementById("axisR").innerHTML = ticks(d) + marks + labels;

    // tick lines
    const quotes = "73,316 90,316 92,326 95,318 98,322 102,328 108,312 118,310 122,293 135,290 143,282 144,264 147,274 152,264 160,268 170,248 198,246 205,252 212,246 222,252 226,264 233,288 240,268 247,266 250,280 254,268 262,270 275,256 288,258 293,268 298,242 304,262 315,252 326,252 335,238 342,234 346,220 352,232 356,246 359,236 362,254 370,260 376,276 385,282 390,274 395,282 398,276 402,284 424,286 430,266 434,260 438,266 460,264 466,278 474,296 479,290";
    const stepPath = (pts, dy) => pts.map(([x, y], n) => n ? `H${x.toFixed(1)}V${(y + dy).toFixed(1)}` : `M${x.toFixed(1)} ${(y + dy).toFixed(1)}`).join("");
    const pts = scale(quotes, 1220, 600);
    document.getElementById("askLine").setAttribute("d", stepPath(pts, 0));
    document.getElementById("bidLine").setAttribute("d", stepPath(pts, 2));
  </script>

</body>
</html>
